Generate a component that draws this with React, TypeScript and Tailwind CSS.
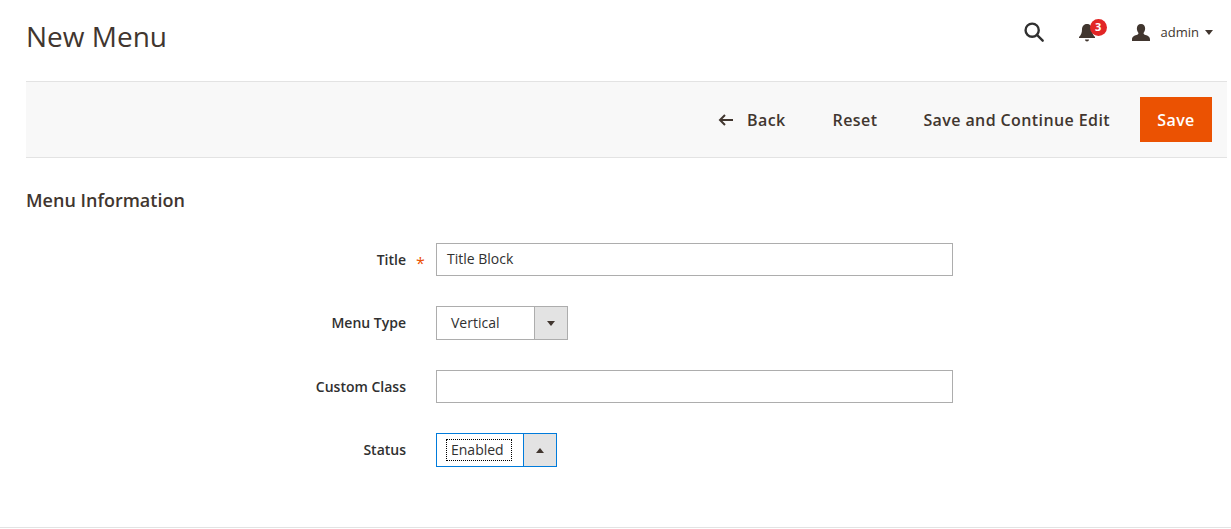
function FieldLabel({ text, required }: { text: string; required?: boolean }) {
  return (
    <div className="relative ml-[26px] w-[380px] text-right text-[14px] font-semibold leading-[20px] text-[#303030]">
      {text}
      {required && <span className="absolute left-[390px] top-[3px] text-[16px] font-normal text-[#eb5202]">*</span>}
    </div>
  );
}

function SelectBox({ value, open }: { value: string; open?: boolean }) {
  return (
    <div
      className={
        open
          ? 'ml-[30px] flex h-[34px] w-[121px] border border-[#007bdb] bg-white text-[14px] text-[#303030]'
          : 'ml-[30px] flex h-[34px] w-[132px] border border-[#adadad] bg-white text-[14px] text-[#303030]'
      }
    >
      <div className="flex flex-1 items-center pl-[10px]">
        <span className={open ? 'pl-[4px] pr-[7px] leading-[20px] outline-1 outline-dotted outline-black' : 'pl-[4px] leading-[20px]'}>{value}</span>
      </div>
      <div
        className={
          open
            ? 'flex w-[33px] items-center justify-center border-l border-[#007bdb] bg-[#e3e3e3]'
            : 'flex w-[33px] items-center justify-center border-l border-[#adadad] bg-[#e3e3e3]'
        }
      >
        <svg width="8" height="5" viewBox="0 0 8 5" className={open ? 'rotate-180' : ''}>
          <path d="M0 0h8L4 5z" fill="#41362f" />
        </svg>
      </div>
    </div>
  );
}

export default function App() {
  return (
    <div className="h-[529px] w-[1231px] overflow-hidden bg-white font-['Open_Sans',sans-serif] text-[#41362f]">
      <header className="flex h-[81px] items-start justify-between pl-[26px] pr-[18px] pt-[18px]">
        <h1 className="text-[28px] font-normal leading-[36px] text-[#41362f]">New Menu</h1>
        <div className="mt-[2px] flex items-center">
          <svg width="22" height="22" viewBox="0 0 24 24" fill="none" stroke="#303030" strokeWidth="2.600">
            <circle cx="10" cy="10" r="7.200" />
            <path d="M15.500 15.500 21.500 21.500" strokeLinecap="round" />
          </svg>
          <div className="relative ml-[33px] h-[24px] w-[28px]">
            <svg width="18" height="20" viewBox="0 0 18 20" className="absolute left-0 top-[3px]" fill="#41362f">
              <path d="M9 1c3.400 0 5 2.600 5 5.500 0 3.500 1 5.500 3 7.500v1H1v-1c2-2 3-4 3-7.500C4 3.600 5.600 1 9 1z" />
              <path d="M7 16.500h4c0 1.200-.9 2-2 2s-2-.8-2-2z" />
            </svg>
            <span className="absolute left-[12px] top-[-1px] flex h-[17px] w-[17px] items-center justify-center rounded-full bg-[#e22626] text-[11px] font-bold text-white">3</span>
          </div>
          <svg width="20" height="18" viewBox="0 0 22 20" fill="#41362f" className="ml-[25px]">
            <path d="M11 1c3 0 4.600 2.200 4.600 5 0 2-.8 3.800-1.800 5 .1 1.300.8 1.800 2.200 2.300 2.600.9 5 1.600 5 5.200V20H1v-1.500c0-3.600 2.400-4.300 5-5.200 1.400-.5 2.100-1 2.200-2.300-1-1.200-1.800-3-1.800-5 0-2.800 1.600-5 4.600-5z" />
          </svg>
          <span className="ml-[10px] text-[13px] leading-[20px] text-[#41362f]">admin</span>
          <svg width="8" height="5" viewBox="0 0 8 5" className="ml-[6px]">
            <path d="M0 0h8L4 5z" fill="#41362f" />
          </svg>
        </div>
      </header>

      <div className="ml-[26px] mr-[4px] flex h-[77px] items-center justify-end border-y border-[#e3e3e3] bg-[#f8f8f8] pr-[15px] text-[16px] font-semibold tracking-[0.4px] text-[#41362f]">
        <button className="flex items-center">
          <svg width="16" height="12" viewBox="0 0 16 12" fill="none" stroke="#41362f" strokeWidth="2">
            <path d="M15 6H2M7 1 2 6l5 5" />
          </svg>
          <span className="ml-[13px]">Back</span>
        </button>
        <button className="ml-[47px]">Reset</button>
        <button className="ml-[46px]">Save and Continue Edit</button>
        <button className="ml-[30px] h-[45px] w-[72px] bg-[#eb5202] text-white">Save</button>
      </div>

      <h2 className="ml-[26px] mt-[31px] text-[18px] font-semibold leading-[22px] text-[#41362f]">Menu Information</h2>

      <div className="mt-[32px] flex flex-col gap-[30px]">
        <div className="flex items-center">
          <FieldLabel text="Title" required />
          <div className="ml-[30px] flex h-[33px] w-[517px] items-center border border-[#adadad] px-[10px] pb-[2px] text-[14px] text-[#303030]">Title Block</div>
        </div>
        <div className="flex items-center">
          <FieldLabel text="Menu Type" />
          <SelectBox value="Vertical" />
        </div>
        <div className="flex items-center">
          <FieldLabel text="Custom Class" />
          <div className="ml-[30px] h-[33px] w-[517px] border border-[#adadad]" />
        </div>
        <div className="flex items-center">
          <FieldLabel text="Status" />
          <SelectBox value="Enabled" open />
        </div>
      </div>

      <div className="mt-[60px] h-px bg-[#e3e3e3]" />
    </div>
  );
}
